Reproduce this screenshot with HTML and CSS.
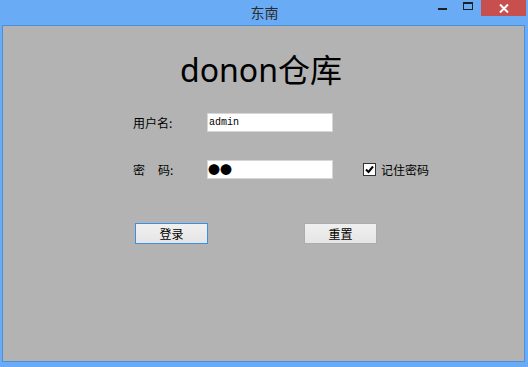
FILE: index.html
```html
<!DOCTYPE html>
<html lang="zh-CN">

<head>
  <meta charset="UTF-8">
  <title>东南</title>
  <link rel="stylesheet" href="styles.css">
</head>

<body>
  <div class="window">
    <div class="titlebar">
      <span class="title">东南</span>
      <div class="controls">
        <span class="btn-min"><span class="bar"></span></span>
        <span class="btn-max"><span class="box"></span></span>
        <span class="btn-close">
          <svg width="10" height="9" viewBox="0 0 10 9">
            <path d="M1 0.5 L9 8.5 M9 0.5 L1 8.5" stroke="#fff" stroke-width="2" fill="none" />
          </svg>
        </span>
      </div>
    </div>

    <div class="client">
      <h1 class="app-title">donon仓库</h1>

      <div class="form">
        <div class="row">
          <label class="label" for="user">用户名:</label>
          <input class="field" type="text" id="user" value="admin" readonly>
        </div>
        <div class="row row-pass">
          <label class="label" for="pass"><span class="gap">密</span>码:</label>
          <input class="field field-dots" type="text" id="pass" value="●●" readonly>
          <label class="remember">
            <span class="check">
              <svg width="11" height="11" viewBox="0 0 11 11">
                <path d="M2 5.5 L4.5 8 L9 2.5" stroke="#000" stroke-width="2" fill="none" />
              </svg>
            </span>
            记住密码
          </label>
        </div>
        <div class="actions">
          <button class="button focused">登录</button>
          <button class="button">重置</button>
        </div>
      </div>
    </div>
  </div>
</body>

</html>
```

FILE: styles.css
```css
html,
body {
  margin: 0;
  padding: 0;
}

body {
  width: 528px;
  height: 367px;
  background: #69acf5;
  font-family: "Noto Sans CJK SC", "Noto Sans", sans-serif;
  overflow: hidden;
}

.window {
  width: 528px;
  height: 367px;
}

/* title bar */
.titlebar {
  position: relative;
  height: 25px;
}

.title {
  display: block;
  text-align: center;
  font-size: 14px;
  line-height: 24px;
  color: #2b2b2b;
  padding-left: 1px;
}

.controls {
  position: absolute;
  top: 0;
  right: 2px;
  display: flex;
}

.btn-min,
.btn-max {
  width: 26px;
  height: 16px;
  display: flex;
  justify-content: center;
}

.btn-min .bar {
  width: 9px;
  height: 2px;
  margin-top: 8px;
  background: #1f1f1f;
}

.btn-max .box {
  width: 8px;
  height: 5px;
  margin-top: 2px;
  border: 1px solid #1f1f1f;
  border-top-width: 2px;
}

.btn-close {
  width: 45px;
  height: 16px;
  background: #c7504f;
  display: flex;
  align-items: center;
  justify-content: center;
}

/* client area */
.client {
  margin-left: 2px;
  width: 523px;
  height: 337px;
  box-sizing: border-box;
  border: 1px solid #4c8fdc;
  background: #b3b3b3;
  padding-top: 24px;
}

.app-title {
  margin: 0;
  font-family: "Noto Sans", "Noto Sans CJK SC", sans-serif;
  font-weight: normal;
  font-size: 32px;
  line-height: 40px;
  color: #000;
  text-align: center;
  padding-right: 5px;
}

.form {
  padding-left: 130px;
  font-size: 12px;
  color: #000;
}

.row {
  display: flex;
  align-items: center;
  margin-top: 23px;
  height: 19px;
}

.row-pass {
  margin-top: 28px;
}

.label {
  width: 74px;
  line-height: 19px;
}

.gap {
  margin-right: 13px;
}

.field {
  width: 126px;
  height: 19px;
  box-sizing: border-box;
  border: 1px solid #d6d6d6;
  background: #fff;
  padding: 0 0 0 1px;
  margin: 0;
  font-family: "Liberation Mono", monospace;
  font-size: 10px;
  color: #000;
  outline: none;
}

.field-dots {
  font-family: "Noto Sans CJK SC", sans-serif;
  font-size: 12px;
  padding-left: 0;
}

.remember {
  display: flex;
  align-items: center;
  margin-left: 30px;
}

.check {
  width: 11px;
  height: 11px;
  border: 1px solid #333;
  background: #fff;
  margin-right: 5px;
  display: flex;
}

.actions {
  display: flex;
  margin-top: 44px;
  padding-left: 2px;
}

.button {
  width: 73px;
  height: 21px;
  margin: 0 96px 0 0;
  padding: 0;
  border: 1px solid #acacac;
  background: linear-gradient(#f0f0f0, #e5e5e5);
  font-family: "Noto Sans CJK SC", sans-serif;
  font-size: 12px;
  color: #000;
}

.button.focused {
  border-color: #3d8ee6;
}
```
